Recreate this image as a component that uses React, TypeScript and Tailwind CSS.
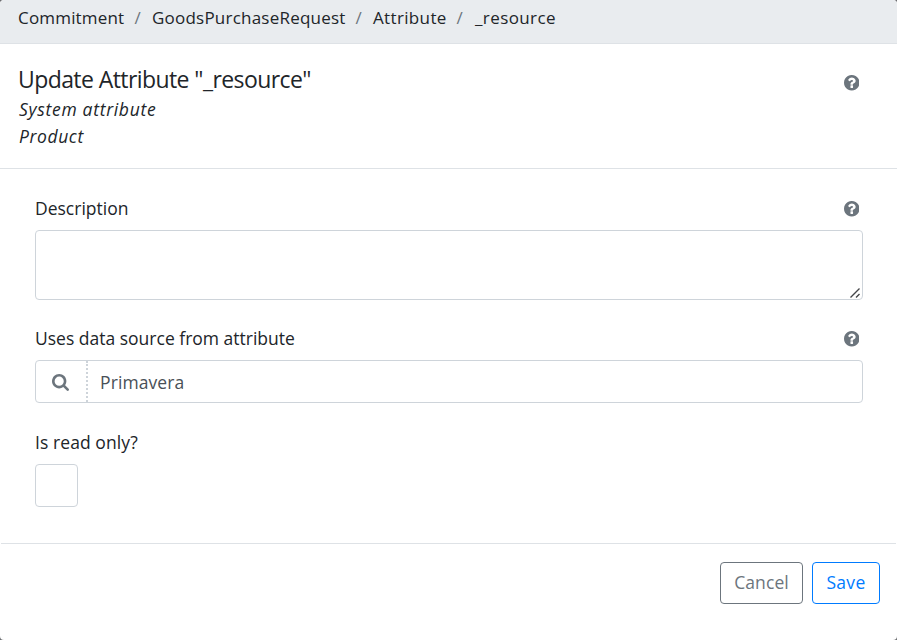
function Help() {
  return (
    <svg viewBox="128 128 1536 1536" className="mr-[3px] h-[15.5px] w-[15.5px] shrink-0 fill-[#6c757d]" aria-label="Help">
      <path d="M1024 1376v-192q0-14-9-23t-23-9H800q-14 0-23 9t-9 23v192q0 14 9 23t23 9h192q14 0 23-9t9-23zm256-672q0-88-55.5-163T1086 425t-170-41q-243 0-371 213-15 24 8 42l132 100q7 6 19 6 16 0 25-12 53-68 86-92 34-24 86-24 48 0 85.5 26t37.5 59q0 38-20 61t-68 45q-63 28-115.5 86.5T768 1020v36q0 14 9 23t23 9h192q14 0 23-9t9-23q0-19 21.5-49.5T1100 957q32-18 49-28.5t46-35 44.5-48 28-60.5 12.5-81zm384 192q0 209-103 385.5T1281.5 1561 896 1664t-385.5-103T231 1281.5 128 896t103-385.5T510.5 231 896 128t385.5 103T1561 510.5 1664 896z" />
    </svg>
  );
}

function SearchIcon() {
  return (
    <svg viewBox="64 128 1664 1664" className="mr-px mt-px size-[17px] fill-[#6c757d]" aria-hidden="true">
      <path d="M1216 832q0-185-131.5-316.5T768 384 451.5 515.5 320 832t131.5 316.5T768 1280t316.5-131.5T1216 832zm512 832q0 52-38 90t-90 38q-54 0-90-38l-343-342q-179 124-399 124-143 0-273.5-55.5t-225-150-150-225T64 832t55.5-273.5 150-225 225-150T768 128t273.5 55.5 225 150 150 225T1472 832q0 220-124 399l343 343q37 37 37 90z" />
    </svg>
  );
}

function Separator() {
  return <span className="w-[28px] pr-px text-center text-[#6c757d]">/</span>;
}

export default function App() {
  return (
    <div className="h-[640px] w-[897px] overflow-hidden bg-[#6b6d70] font-['Open_Sans',sans-serif] text-[17px] leading-[27px] text-[#212529]">
      <div className="flex h-full flex-col overflow-hidden rounded-[4px] bg-white">
        <nav className="flex h-[44px] shrink-0 border-b border-[#dee2e6] bg-[#e9ecef] pt-1 pl-[18px] whitespace-nowrap">
          <span className="w-[106px] tracking-[0.18px]">Commitment</span>
          <Separator />
          <span className="w-[193px] tracking-[0.22px]">GoodsPurchaseRequest</span>
          <Separator />
          <span className="w-[73px] tracking-[0.35px]">Attribute</span>
          <Separator />
          <span className="pl-px tracking-[0.4px]">_resource</span>
        </nav>
        <header className="flex h-[125px] shrink-0 items-start justify-between border-b border-[#dee2e6] pt-[21px] pr-[35px] pl-[18px]">
          <div>
            <h1 className="h-[31px] text-[23px] leading-[29px] tracking-[-0.58px]">Update Attribute "_resource"</h1>
            <p className="pl-px text-[17.5px] tracking-[0.7px] italic">System attribute</p>
            <p className="pl-px text-[17.5px] tracking-[0.6px] italic">Product</p>
          </div>
          <div className="pt-[10px]"><Help /></div>
        </header>
        <main className="flex h-[374px] shrink-0 flex-col pt-[26px] pr-[34px] pl-[35px]">
          <div className="flex h-[35px] items-start justify-between">
            <label htmlFor="description" className="text-[17.5px]">Description</label>
            <div className="pt-[6px] pr-px"><Help /></div>
          </div>
          <div className="relative h-[70px] shrink-0">
            <textarea id="description" className="block h-full w-full resize-none rounded-[4px] border border-[#ced4da] bg-white" />
            <svg viewBox="0 0 12 12" className="pointer-events-none absolute right-[2px] bottom-[1px] size-[12px] stroke-[#444649]" fill="none" strokeWidth="1.4">
              <path d="M1.5 10.5 10.5 1.5M7 10.5 10.5 7" />
            </svg>
          </div>
          <div className="mt-[25px] flex h-[35px] items-start justify-between">
            <label className="text-[17.5px]">Uses data source from attribute</label>
            <div className="pt-[6px] pr-px"><Help /></div>
          </div>
          <div className="flex h-[43px] shrink-0 rounded-[4px] border border-[#ced4da]">
            <div className="flex w-[52px] items-center justify-center border-r-2 border-dotted border-[#ced4da]">
              <SearchIcon />
            </div>
            <span className="pt-[8px] pl-[12px] text-[17.5px] tracking-[0.1px] text-[#495057]">Primavera</span>
          </div>
          <label className="mt-[26px] h-[35px] text-[17.5px] tracking-[0.08px]">Is read only?</label>
          <div className="size-[43px] shrink-0 rounded-[4px] border border-[#ced4da]" />
        </main>
        <footer className="mx-px flex grow items-start justify-end gap-[9px] border-t border-[#dee2e6] pt-[18px] pr-4">
          <button className="h-[42px] w-[83px] rounded-[4px] border border-[#6c757d] pb-[2px] text-[17.5px] tracking-[0.1px] text-[#6c757d]">Cancel</button>
          <button className="h-[42px] w-[68px] rounded-[4px] border border-[#007bff] pb-[2px] text-[17.5px] tracking-[0.3px] text-[#007bff]">Save</button>
        </footer>
      </div>
    </div>
  );
}
